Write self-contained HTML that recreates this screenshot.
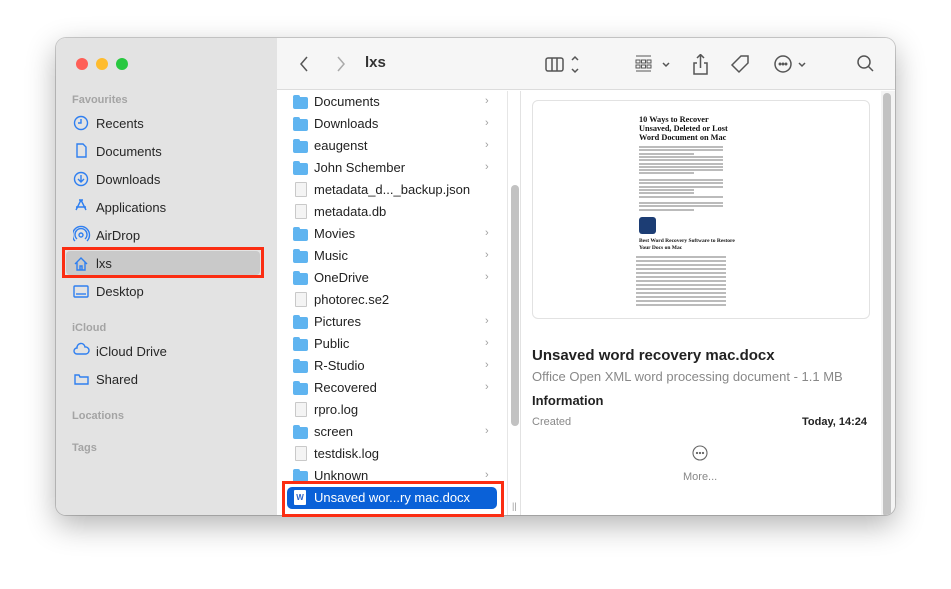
<!DOCTYPE html>
<html><head><meta charset="utf-8"><style>
*{box-sizing:border-box;margin:0;padding:0}
body{width:951px;height:589px;background:#fff;font-family:"Liberation Sans",sans-serif;position:relative;overflow:hidden}
.win{position:absolute;left:56px;top:38px;width:839px;height:477px;border-radius:10px;background:#fff;overflow:hidden;box-shadow:0 10px 30px rgba(0,0,0,.3),0 0 0 1px rgba(0,0,0,.18)}
.side{position:absolute;left:0;top:0;width:221px;height:477px;background:#e3e3e3}
.tb{position:absolute;left:221px;top:0;width:618px;height:52px;background:#f6f6f6;border-bottom:1px solid #dcdcdc}
.a{position:absolute;white-space:nowrap}
.dot{position:absolute;top:20px;width:12px;height:12px;border-radius:50%}
.sh{font-size:11px;color:#a4a4a4;font-weight:bold}
.si{font-size:13px;color:#262626}
.fi{font-size:13px;color:#222}
.fold{position:absolute;width:15px;height:12px;background:#5fb4f0;border-radius:2px}
.fold:before{content:"";position:absolute;left:0;top:-2px;width:7px;height:3px;background:#5fb4f0;border-radius:2px 2px 0 0}
.doc{position:absolute;width:12px;height:15px;background:#f4f4f4;border:1px solid #c9c9c9;border-radius:1px}
.chev{position:absolute;font-size:11px;color:#a0a0a0}
.ln{position:absolute;height:2px;background:#bbb}
</style></head><body>
<div class="win">
<div class="side"></div>
<div class="tb"></div>
<div class="dot" style="left:20px;background:#fe5f57"></div>
<div class="dot" style="left:40px;background:#febc2e"></div>
<div class="dot" style="left:60px;background:#28c840"></div>
<div class="a sh" style="left:16px;top:56px">Favourites</div>
<div class="a si" style="left:40px;top:78px">Recents</div>
<div class="a si" style="left:40px;top:106px">Documents</div>
<div class="a si" style="left:40px;top:134px">Downloads</div>
<div class="a si" style="left:40px;top:162px">Applications</div>
<div class="a si" style="left:40px;top:190px">AirDrop</div>
<div class="a" style="left:10px;top:213px;width:194px;height:24px;background:#c9c9c9;border-radius:4px"></div>
<div class="a" style="left:6px;top:209px;width:202px;height:31px;border:3px solid #fb2d12"></div>
<div class="a si" style="left:40px;top:218px">lxs</div>
<div class="a si" style="left:40px;top:246px">Desktop</div>
<div class="a sh" style="left:16px;top:284px">iCloud</div>
<div class="a si" style="left:40px;top:306px">iCloud Drive</div>
<div class="a si" style="left:40px;top:334px">Shared</div>
<div class="a sh" style="left:16px;top:372px">Locations</div>
<div class="a sh" style="left:16px;top:404px">Tags</div>
<svg class="a" style="left:17px;top:76px" width="18" height="200" fill="none" stroke="#2f7ff0" stroke-width="1.4">
<circle cx="8" cy="9" r="6.5"/><path d="M8 5v4h-3"/>
<path d="M4 30h6l3 3v10H4z"/>
<circle cx="8" cy="65" r="6.5"/><path d="M8 61v7M5 65l3 3 3-3"/>
<path d="M8 86l-5 10M8 86l5 10M3 93h10M6 86h4"/>
<circle cx="8" cy="121" r="2"/><path d="M4 125a6 6 0 1 1 8 0M2 127a8.5 8.5 0 1 1 12 0"/>
<path d="M2 150l6-6 6 6M4 148v8h8v-8M7 156v-4h2v4"/>
<rect x="1" y="172" width="14" height="11" rx="1"/><path d="M3 180h10"/>
</svg>
<svg class="a" style="left:17px;top:303px" width="18" height="90" fill="none" stroke="#2f7ff0" stroke-width="1.4">
<path d="M4 13a3 3 0 0 1 0-6a4 4 0 0 1 8-1a3.5 3.5 0 0 1 1 7z"/>
<path d="M2 43v-9h4l1 2h8v7z"/>
</svg>
<!-- toolbar -->
<svg class="a" style="left:240px;top:16px" width="600" height="22" fill="none" stroke="#555" stroke-width="1.5">
<path d="M11 3l-6 7 6 7"/><path d="M42 3l6 7-6 7" stroke="#aaa"/>
<rect x="250" y="4" width="17" height="13" rx="2"/><path d="M256 4v13M261 4v13"/>
<path d="M276 6l3-3 3 3M276 15l3 3 3-3"/>
<path d="M340 2h15M340 17h15" stroke-width="1"/>
<rect x="340" y="6" width="4" height="3" stroke-width="1"/><rect x="345.5" y="6" width="4" height="3" stroke-width="1"/><rect x="351" y="6" width="4" height="3" stroke-width="1"/>
<rect x="340" y="11" width="4" height="3" stroke-width="1"/><rect x="345.5" y="11" width="4" height="3" stroke-width="1"/><rect x="351" y="11" width="4" height="3" stroke-width="1"/>
<path d="M367 9l3 3 3-3"/>
<path d="M401 9h-3v11h13V9h-3M404.5 14V1M401 4l3.5-3.5 3.5 3.5"/>
<path d="M445 2h7v7l-9 9-7-7z"/>
<circle cx="487" cy="10" r="8"/>
<circle cx="484" cy="10" r=".7" fill="#555"/><circle cx="487" cy="10" r=".7" fill="#555"/><circle cx="490" cy="10" r=".7" fill="#555"/>
<path d="M503 9l3 3 3-3"/>
<circle cx="568" cy="8" r="6"/><path d="M572 12l5 5"/>
</svg>
<div class="a" style="left:309px;top:16px;font-size:15px;font-weight:bold;color:#333">lxs</div>
<div class="a" style="left:451px;top:53px;width:1px;height:424px;background:#e6e6e6"></div>
<div class="a" style="left:455px;top:147px;width:8px;height:241px;background:#c2c2c2;border-radius:4px"></div>
<div class="a" style="left:464px;top:53px;width:1px;height:424px;background:#e2e2e2"></div>
<div class="a" style="left:825px;top:53px;width:14px;height:424px;background:#f4f4f4"></div>
<div class="a" style="left:827px;top:55px;width:8px;height:424px;background:#c2c2c2;border-radius:4px"></div>
<div class="a" style="left:456px;top:463px;font-size:9px;color:#999">||</div>
</div>
<div id="files"></div>
<div class="a" style="left:287px;top:487px;width:210px;height:22px;background:#0a61d8;border-radius:5px"></div>
<div class="a" style="left:282px;top:481px;width:222px;height:36px;border:3px solid #fb2d12"></div>
<div class="a" style="left:294px;top:490px;width:12px;height:15px;background:#fff;border-radius:1px;font-size:8px;color:#2a62c9;font-weight:bold;text-align:center;line-height:15px">W</div>
<div class="a" style="left:314px;top:490px;font-size:13px;color:#fff">Unsaved wor...ry mac.docx</div>
<div class="a" style="left:532px;top:100px;width:338px;height:219px;border:1px solid #e2e2e2;border-radius:6px;background:#fff"></div>
<div class="a" style="left:639px;top:115px;font-family:'Liberation Serif',serif;font-weight:bold;font-size:8.3px;line-height:9px;color:#111">10 Ways to Recover<br>Unsaved, Deleted or Lost<br>Word Document on Mac</div>
<div id="lines"></div>
<div class="a" style="left:639px;top:217px;width:17px;height:17px;background:#1c3d74;border-radius:3px"></div>
<div class="a" style="left:639px;top:238px;font-family:'Liberation Serif',serif;font-weight:bold;font-size:5.5px;line-height:6.5px;color:#111">Best Word Recovery Software to Restore<br>Your Docs on Mac</div>
<div class="a" style="left:532px;top:347px;font-size:15px;font-weight:bold;color:#222">Unsaved word recovery mac.docx</div>
<div class="a" style="left:532px;top:369px;font-size:13px;color:#888">Office Open XML word processing document - 1.1 MB</div>
<div class="a" style="left:532px;top:393px;font-size:13px;font-weight:bold;color:#222">Information</div>
<div class="a" style="left:532px;top:416px;font-size:11px;color:#888">Created</div>
<div class="a" style="left:802px;top:416px;font-size:11px;color:#222;font-weight:bold">Today, 14:24</div>
<svg class="a" style="left:692px;top:445px" width="16" height="16" fill="none" stroke="#666" stroke-width="1.1"><circle cx="8" cy="8" r="7"/><circle cx="5" cy="8" r=".6" fill="#666"/><circle cx="8" cy="8" r=".6" fill="#666"/><circle cx="11" cy="8" r=".6" fill="#666"/></svg>
<div class="a" style="left:683px;top:471px;font-size:11px;color:#888">More...</div>
<script>
var f=[["Documents",1],["Downloads",1],["eaugenst",1],["John Schember",1],["metadata_d..._backup.json",0],["metadata.db",0],["Movies",1],["Music",1],["OneDrive",1],["photorec.se2",0],["Pictures",1],["Public",1],["R-Studio",1],["Recovered",1],["rpro.log",0],["screen",1],["testdisk.log",0],["Unknown",1]];
var h="";f.forEach(function(r,i){var y=102+22*i;
h+=r[1]?'<div class="fold" style="left:293px;top:'+(y-5)+'px"></div><div class="chev" style="left:485px;top:'+(y-7)+'px">&#x203A;</div>':'<div class="doc" style="left:295px;top:'+(y-8)+'px"></div>';
h+='<div class="a fi" style="left:314px;top:'+(y-8)+'px">'+r[0]+'</div>';});
document.getElementById("files").innerHTML=h;
var l="";for(var y=146;y<212;y+=3.3){if(Math.abs(y-176)<3||Math.abs(y-199)<2)continue;l+='<div class="ln" style="left:639px;top:'+y+'px;width:'+(y%4<1?55:84)+'px"></div>';}
for(var y=256;y<305;y+=4)l+='<div class="ln" style="left:636px;top:'+y+'px;width:90px"></div>';
document.getElementById("lines").innerHTML=l;
</script>
</body></html>
